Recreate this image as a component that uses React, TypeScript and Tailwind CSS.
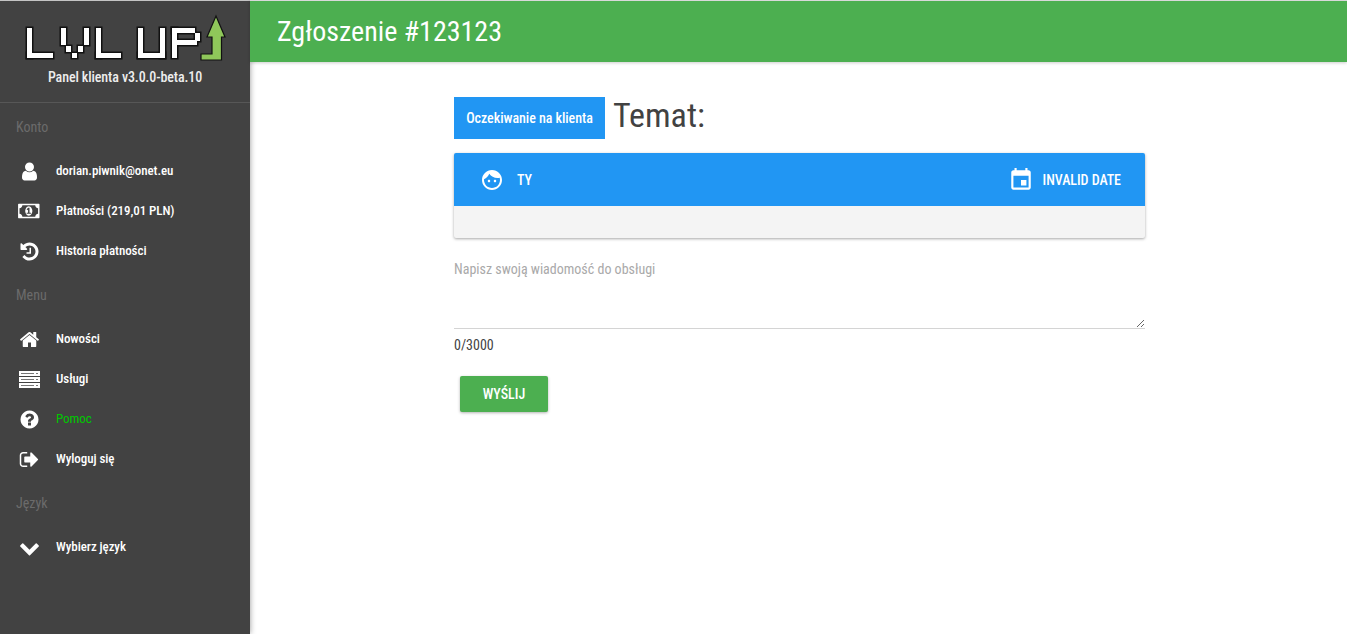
import * as React from 'react';

function FaIcon({ d, box = 1792, width = 21, height = 21 }: { d: string; box?: number; width?: number; height?: number }) {
  return (
    <svg width={width} height={height} viewBox={`0 0 ${box} 1792`} fill="#fff">
      <path d={d} />
    </svg>
  );
}

function ServerIcon() {
  return (
    <svg width="21" height="17" viewBox="0 0 21 17">
      {[0, 6, 12].map((y) => (
        <g key={y}>
          <rect x="0" y={y} width="21" height="5" fill="#fff" />
          <rect x="2" y={y + 2} width="13" height="1" fill="#777" />
          <rect x="17" y={y + 2} width="2" height="1" fill="#777" />
        </g>
      ))}
    </svg>
  );
}

const userPath =
  'M1536 1399q0 109-62.500 187t-150.500 78h-854q-88 0-150.500-78t-62.500-187q0-85 8.500-160.500t31.500-152 58.500-131 94-89 134.500-34.500q131 128 313 128t313-128q76 0 134.500 34.500t94 89 58.500 131 31.500 152 8.500 160.500zm-256-887q0 159-112.500 271.500t-271.500 112.500-271.500-112.500-112.500-271.500 112.500-271.500 271.500-112.500 271.500 112.500 112.500 271.500z';
const moneyPath =
  'M768 1152h384v-96h-128v-448h-114l-148 137 77 80q42-37 55-57h2v288h-128v96zm512-256q0 70-21 142t-59.500 134-101.500 101-138 39-138-39-101.500-101-59.500-134-21-142 21-142 59.500-134 101.500-101 138-39 138 39 101.500 101 59.500 134 21 142zm512 256v-512q-106 0-181-75t-75-181h-1152q0 106-75 181t-181 75v512q106 0 181 75t75 181h1152q0-106 75-181t181-75zm128-832v1152q0 26-19 45t-45 19h-1792q-26 0-45-19t-19-45v-1152q0-26 19-45t45-19h1792q26 0 45 19t19 45z';
const historyPath =
  'M1664 896q0 156-61 298t-164 245-245 164-298 61q-172 0-327-72.500t-264-204.500q-7-10-6.500-22.500t8.500-20.500l137-138q10-9 25-9 16 2 23 12 73 95 179 147t225 52q104 0 198.500-40.500t163.500-109.500 109.500-163.500 40.500-198.500-40.500-198.500-109.500-163.500-163.500-109.500-198.500-40.500q-98 0-188 35.500t-160 101.500l137 138q31 30 14 69-17 40-59 40h-448q-26 0-45-19t-19-45v-448q0-42 40-59 39-17 69 14l130 129q107-101 244.500-156.500t284.500-55.500q156 0 298 61t245 164 164 245 61 298zm-640-288v448q0 14-9 23t-23 9h-320q-14 0-23-9t-9-23v-64q0-14 9-23t23-9h224v-352q0-14 9-23t23-9h64q14 0 23 9t9 23z';
const homePath =
  'M1472 992v480q0 26-19 45t-45 19h-384v-384h-256v384h-384q-26 0-45-19t-19-45v-480q0-1 .5-3t.5-3l575-474 575 474q1 2 1 6zm223-69l-62 74q-8 9-21 11h-3q-13 0-21-7l-692-577-692 577q-12 8-24 7-13-2-21-11l-62-74q-8-10-7-23.500t11-21.500l719-599q32-26 76-26t76 26l244 204v-195q0-14 9-23t23-9h192q14 0 23 9t9 23v408l219 182q10 8 11 21.500t-7 23.500z';
const questionPath =
  'M1024 1376v-192q0-14-9-23t-23-9h-192q-14 0-23 9t-9 23v192q0 14 9 23t23 9h192q14 0 23-9t9-23zm256-672q0-88-55.500-163t-138.500-116-170-41q-243 0-371 213-15 24 8 42l132 100q7 6 19 6 16 0 25-12 53-68 86-92 34-24 86-24 48 0 85.500 26t37.500 59q0 38-20 61t-68 45q-63 28-115.500 86.500t-52.500 125.500v36q0 14 9 23t23 9h192q14 0 23-9t9-23q0-19 21.500-49.500t54.500-49.500q32-18 49-28.500t46-35 44.500-48 28-60.500 12.500-81zm384 192q0 209-103 385.500t-279.500 279.500-385.500 103-385.500-103-279.500-279.500-103-385.500 103-385.500 279.500-279.500 385.500-103 385.500 103 279.500 279.500 103 385.500z';
const signOutPath =
  'M704 1440q0 4 1 20t.5 26.500-3 23.500-10 19.500-20.500 6.500h-320q-119 0-203.500-84.500t-84.500-203.500v-704q0-119 84.500-203.500t203.500-84.500h320q13 0 22.500 9.500t9.500 22.500q0 4 1 20t.5 26.500-3 23.500-10 19.500-20.500 6.500h-320q-66 0-113 47t-47 113v704q0 66 47 113t113 47h312l11.500 1 11.500 3 8 5.500 7 9 2 13.500zm928-544q0 26-19 45l-544 544q-19 19-45 19t-45-19-19-45v-288h-448q-26 0-45-19t-19-45v-384q0-26 19-45t45-19h448v-288q0-26 19-45t45-19 45 19l544 544q19 19 19 45z';
const chevronPath =
  'M1683 808l-742 741q-19 19-45 19t-45-19l-742-741q-19-19-19-45.500t19-45.500l166-165q19-19 45-19t45 19l531 531 531-531q19-19 45-19t45 19l166 165q19 19 19 45.500t-19 45.500z';

const accountItems = [
  { label: 'dorian.piwnik@onet.eu', icon: <FaIcon d={userPath} /> },
  { label: 'Płatności (219,01 PLN)', icon: <FaIcon d={moneyPath} box={2048} width={23} height={20} /> },
  { label: 'Historia płatności', icon: <FaIcon d={historyPath} /> },
];

const menuItems = [
  { label: 'Nowości', icon: <FaIcon d={homePath} /> },
  { label: 'Usługi', icon: <ServerIcon /> },
  { label: 'Pomoc', icon: <FaIcon d={questionPath} />, active: true },
  { label: 'Wyloguj się', icon: <FaIcon d={signOutPath} /> },
];

// logo pixels, page coordinates
const logoBlocks = [
  [27, 28, 5, 30], [27, 53, 26, 5],
  [61, 28, 5, 17], [66, 46, 5, 6], [72, 53, 5, 5], [78, 46, 5, 6], [84, 28, 5, 17],
  [96, 28, 5, 30], [96, 53, 25, 5],
  [138, 28, 5, 30], [138, 53, 27, 5], [160, 28, 5, 30],
  [172, 28, 5, 30], [172, 28, 23, 5], [195, 33, 5, 8], [177, 40, 20, 5],
];

function Logo() {
  return (
    <svg width="201" height="48" viewBox="25 14 201 48" role="img" aria-label="LVL UP">
      {logoBlocks.map(([x, y, w, h]) => (
        <rect key={`o${x}-${y}`} x={x - 1.5} y={y - 1.5} width={w + 3} height={h + 3} fill="#111" />
      ))}
      {logoBlocks.map(([x, y, w, h]) => (
        <rect key={`w${x}-${y}`} x={x} y={y} width={w} height={h} fill="#fff" />
      ))}
      <path d="M216 16L225 37H221.500V60H201V54H212V37H207z" fill="#8fc75a" stroke="#111" strokeWidth="1.200" />
    </svg>
  );
}

function SectionLabel({ children }: { children: React.ReactNode }) {
  return <div className="pl-4 text-[14px] leading-5 text-[#6b6b6b]">{children}</div>;
}

function NavItem({ label, icon, active }: { label: string; icon: React.ReactNode; active?: boolean }) {
  return (
    <div className="flex h-10 items-center pl-[17px]">
      <div className="flex w-6 shrink-0 justify-center">{icon}</div>
      <span
        className={`ml-[15px] text-[13px] tracking-[-0.07px] ${active ? 'font-normal text-[#00c800]' : 'font-medium text-white'}`}
      >
        {label}
      </span>
    </div>
  );
}

export default function App() {
  return (
    <div className="flex h-[634px] w-[1347px] overflow-hidden bg-white font-[Roboto,sans-serif] font-stretch-[75%]">
      <aside className="flex w-[250px] shrink-0 flex-col border-t border-[#c4c4c4] bg-[#424242] shadow-[0_0_6px_rgba(0,0,0,0.4)]">
        <div className="flex h-[102px] flex-col border-b border-[#575757] pt-[13px]">
          <div className="ml-[25px] flex">
            <Logo />
          </div>
          <div className="mt-[5px] text-center text-[14px] font-medium leading-5 tracking-[-0.1px] text-[#eeeeee]">
            Panel klienta v3.0.0-beta.10
          </div>
        </div>
        <div className="pt-[14px]">
          <SectionLabel>Konto</SectionLabel>
          <div className="mt-[14px]">
            {accountItems.map((item) => (
              <NavItem key={item.label} {...item} />
            ))}
          </div>
          <div className="mt-[14px]">
            <SectionLabel>Menu</SectionLabel>
          </div>
          <div className="mt-[14px]">
            {menuItems.map((item) => (
              <NavItem key={item.label} {...item} />
            ))}
          </div>
          <div className="mt-[14px]">
            <SectionLabel>Język</SectionLabel>
          </div>
          <div className="mt-[14px]">
            <NavItem label="Wybierz język" icon={<FaIcon d={chevronPath} />} />
          </div>
        </div>
      </aside>
      <div className="flex min-w-0 flex-1 flex-col">
        <header className="flex h-[62px] shrink-0 items-center border-t border-[#d9d9d9] bg-[#4caf50] pl-[27px] shadow-[0_1px_3px_rgba(0,0,0,0.2)]">
          <h1 className="text-[28px] font-normal text-white">Zgłoszenie #123123</h1>
        </header>
        <main className="ml-[204px] w-[691px] pt-[35px]">
          <div className="flex h-[42px] items-center">
            <span className="flex h-[42px] w-[151px] items-center justify-center bg-[#2196f3] text-[14px] font-medium tracking-[-0.05px] text-white">
              Oczekiwanie na klienta
            </span>
            <span className="mb-[6px] ml-[8px] text-[34px] text-[#424242]">Temat:</span>
          </div>
          <div className="mt-[14px] overflow-hidden rounded-[2px] bg-[#f4f4f4] shadow-[0_1px_3px_rgba(0,0,0,0.35)]">
            <div className="flex h-[53px] items-center justify-between bg-[#2196f3] pl-[26px] pr-6 text-white">
              <div className="flex items-center">
                <svg width="24" height="24" viewBox="0 0 24 24" fill="currentColor">
                  <path d="M9 11.750c-.69 0-1.250.56-1.250 1.250s.56 1.250 1.250 1.250 1.250-.56 1.250-1.250-.56-1.250-1.250-1.250zm6 0c-.69 0-1.250.56-1.250 1.250s.56 1.250 1.250 1.250 1.250-.56 1.250-1.250-.56-1.250-1.250-1.250zM12 2C6.480 2 2 6.480 2 12s4.480 10 10 10 10-4.480 10-10S17.520 2 12 2zm0 18c-4.410 0-8-3.590-8-8 0-.29.02-.58.05-.86 2.360-1.050 4.230-2.980 5.210-5.370C11.070 8.330 14.050 10 17.420 10c.78 0 1.530-.09 2.250-.26.21.71.33 1.470.33 2.260 0 4.410-3.590 8-8 8z" />
                </svg>
                <span className="ml-[13px] mt-[2px] text-[14px] font-medium">TY</span>
              </div>
              <div className="flex items-center">
                <svg width="26" height="26" viewBox="0 0 24 24" fill="currentColor">
                  <path d="M17 12h-5v5h5v-5zM16 1v2H8V1H6v2H5c-1.110 0-1.990.9-1.990 2L3 19c0 1.100.89 2 2 2h14c1.100 0 2-.9 2-2V5c0-1.100-.9-2-2-2h-1V1h-2zm3 18H5V8h14v11z" />
                </svg>
                <span className="ml-[9px] mt-[2px] text-[14px] font-medium tracking-[-0.05px]">INVALID DATE</span>
              </div>
            </div>
            <div className="h-[32px]" />
          </div>
          <div className="mt-[21px] text-[14px] leading-5 text-[#a9a9a9]">Napisz swoją wiadomość do obsługi</div>
          <textarea className="block h-[50px] w-full border-b border-[#d4d4d4] outline-none" />
          <div className="mt-[6px] text-[14px] leading-5 text-[#424242]">0/3000</div>
          <button className="ml-[6px] mt-[21px] h-9 w-[88px] rounded-[2px] bg-[#4caf50] text-[14px] font-medium text-white shadow-[0_1px_3px_rgba(0,0,0,0.3)]">
            WYŚLIJ
          </button>
        </main>
      </div>
    </div>
  );
}
